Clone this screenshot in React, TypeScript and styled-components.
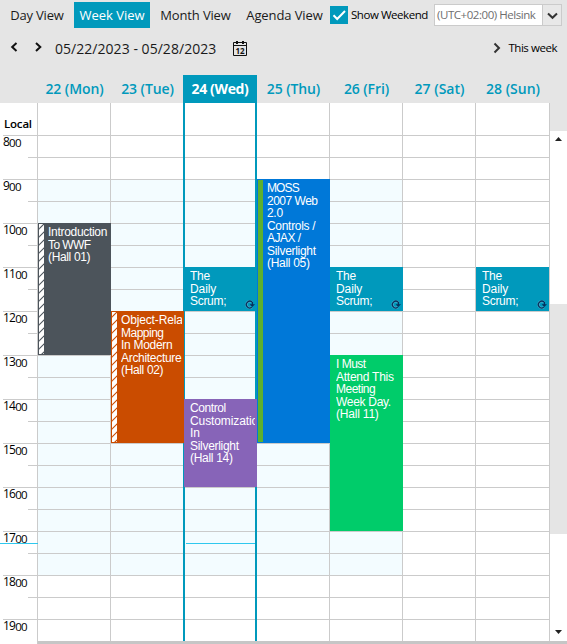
import React from 'react';
import styled, { createGlobalStyle, css } from 'styled-components';

const ACCENT = '#0099bc';
const LINE = '#cbcbcb';
const SLOT = 22;

const GlobalStyle = createGlobalStyle`
  *, *::before, *::after { box-sizing: border-box; }
  html, body { margin: 0; background: #e5e5e5; overflow: hidden; }
`;

const Page = styled.div`
  width: 567px;
  height: 644px;
  display: flex;
  flex-direction: column;
  background: #e5e5e5;
  color: #000;
  font-family: 'Open Sans', 'Noto Sans', sans-serif;
  font-size: 14px;
  overflow: hidden;
`;

const Text = styled.span<{ $ls?: number }>`
  white-space: pre;
  letter-spacing: ${(p) => p.$ls ?? 0}px;
`;

const Toolbar = styled.div`
  display: flex;
  height: 30px;
  padding-top: 2px;
  flex: none;
`;

const ViewTab = styled.button<{ $active?: boolean; $w: number }>`
  width: ${(p) => p.$w}px;
  height: 26px;
  padding: 0;
  border: 0;
  flex: none;
  text-align: center;
  font: 13px/26px 'Open Sans', sans-serif;
  white-space: nowrap;
  color: ${(p) => (p.$active ? '#fff' : '#1a1a1a')};
  background: ${(p) => (p.$active ? ACCENT : 'transparent')};
`;

const CheckLabel = styled.label`
  display: flex;
  margin-left: 2px;
  width: 104px;
  gap: 3px;
  padding-top: 4px;
  flex: none;
  font-size: 11.5px;
  line-height: 18px;
`;

const CheckBox = styled.span`
  width: 18px;
  height: 18px;
  flex: none;
  background: ${ACCENT};
  svg { display: block; }
`;

const ZoneSelect = styled.div`
  display: flex;
  width: 128px;
  height: 22px;
  margin-top: 2px;
  border: 1px solid ${LINE};
  background: #fff;
  color: #6e6e6e;
  font-size: 11.5px;
  line-height: 20px;
  flex: none;
`;

const ZoneValue = styled.div`
  width: 107px;
  padding-left: 2px;
  overflow: hidden;
`;

const ZoneArrow = styled.div`
  flex: 1;
  border-left: 1px solid ${LINE};
  background: #e8e8e8;
  svg { display: block; }
`;

const Navigator = styled.div`
  display: flex;
  align-items: center;
  height: 45px;
  padding: 0 10px 9px 9px;
  flex: none;
`;

const NavArrow = styled.svg`
  width: 12px;
  height: 12px;
  margin-right: 12px;
  margin-top: -2px;
  fill: none;
  stroke: #111;
  stroke-width: 2;
`;

const DateRange = styled.span`
  width: 178px;
  margin-left: -2px;
  line-height: 20px;
  padding-top: 2px;
  white-space: nowrap;
  color: #1a1a1a;
`;

const ThisWeek = styled.div`
  margin-left: auto;
  display: flex;
  align-items: center;
  gap: 7px;
  font-size: 11.5px;
  line-height: 18px;
`;

const DayHeaders = styled.div`
  display: grid;
  grid-template-columns: repeat(6, 73px) 74px;
  height: 28px;
  padding-left: 38px;
  flex: none;
`;

const DayHeader = styled.div<{ $today?: boolean }>`
  text-align: center;
  font-weight: 600;
  line-height: 28px;
  color: ${ACCENT};
  ${(p) =>
    p.$today &&
    css`
      margin-left: -1px;
      background: ${ACCENT};
      color: #fff;
      font-weight: 700;
    `}
`;

const Body = styled.div`
  display: grid;
  grid-template-columns: 38px repeat(6, 73px) 74px 17px;
  height: 538px;
  flex: none;
`;

const Gutter = styled.div`
  position: relative;
  background: #fff;
  border-right: 1px solid ${LINE};
`;

const GutterTop = styled.div`
  height: 32px;
  padding: 12px 0 0 4px;
  font-size: 11.5px;
  font-weight: 600;
  line-height: 18px;
`;

const HourCell = styled.div`
  display: flex;
  flex-direction: column;
  align-items: flex-end;
  height: ${SLOT * 2}px;
`;

const HourLabel = styled.div`
  width: 34px;
  height: ${SLOT}px;
  border-top: 1px solid ${LINE};
  font-size: 12px;
  line-height: 12px;
  letter-spacing: -0.8px;
  white-space: nowrap;
`;

const Minutes = styled.span`
  position: relative;
  top: 1px;
  font-size: 11.5px;
  letter-spacing: -0.7px;
`;

const HalfTick = styled.div`
  width: 9px;
  height: ${SLOT}px;
  border-top: 1px solid ${LINE};
`;

const NowLine = styled.div<{ $left: number; $right: number; $top: number }>`
  position: absolute;
  top: ${(p) => p.$top}px;
  left: ${(p) => p.$left}px;
  right: ${(p) => p.$right}px;
  height: 1px;
  background: #2fc8ee;
`;

const Column = styled.div<{ $today?: boolean }>`
  position: relative;
  background: #fff;
  display: grid;
  grid-template-columns: 100%;
  grid-template-rows: 32px repeat(23, ${SLOT}px);
  height: 538px;
  overflow: visible;
  z-index: ${(p) => (p.$today ? 1 : 'auto')};
`;

const Slot = styled.div<{ $row: number; $work: boolean }>`
  grid-area: ${(p) => p.$row} / 1;
  border-top: ${(p) => (p.$row > 1 ? `1px solid ${LINE}` : '0')};
  border-right: 1px solid ${LINE};
  background: ${(p) => (p.$work ? '#f3fcff' : '#fff')};
`;

const TodayFrame = styled.div`
  grid-area: 1 / 1 / -1 / 2;
  margin-left: -1px;
  border: solid ${ACCENT};
  border-width: 0 2px;
`;

const EventBox = styled.div<{ $from: number; $to: number; $color: string }>`
  grid-area: ${(p) => p.$from} / 1 / ${(p) => p.$to} / 2;
  position: relative;
  z-index: 2;
  display: flex;
  width: 73px;
  background: ${(p) => p.$color};
  border: 1px solid ${(p) => p.$color};
  color: #fff;
  overflow: hidden;
`;

const Strip = styled.div<{ $fill: string }>`
  width: 5px;
  flex: none;
  background: ${(p) => p.$fill};
  svg { display: block; }
`;

const EventText = styled.div<{ $pad: number }>`
  flex: 1;
  min-width: 0;
  margin: 2px 1px 0 ${(p) => p.$pad}px;
  overflow: hidden;
  font: 12px/12.55px 'Liberation Sans', Arial, sans-serif;
`;

const EventLine = styled.div<{ $ls: number }>`
  white-space: pre;
  letter-spacing: ${(p) => p.$ls}px;
`;

const RecurIcon = styled.svg`
  position: absolute;
  right: 1px;
  bottom: 1px;
`;

const ScrollTrack = styled.div`
  padding-top: 28px;
  display: flex;
  flex-direction: column;
`;

const ScrollPart = styled.div<{ $h: number; $thumb?: boolean; $end?: boolean }>`
  height: ${(p) => p.$h}px;
  background: ${(p) => (p.$thumb ? '#e5e5e5' : '#fff')};
  display: flex;
  justify-content: center;
  align-items: ${(p) => (p.$end ? 'flex-end' : 'flex-start')};
  padding: 6px 0 7px;
`;

const Footer = styled.div`
  height: 3px;
  background: #c6c6c6;
`;

type Line = [string, number];
type Evt = {
  from: number;
  to: number;
  color: string;
  lines: Line[];
  strip?: 'hatch' | 'solid';
  recur?: boolean;
};

const scrum: Evt = {
  from: 8,
  to: 10,
  color: ACCENT,
  recur: true,
  lines: [['The', -0.3], ['Daily', -0.1], ['Scrum;', -0.3]],
};

const days: { label: string; ls: number; today?: boolean; weekend?: boolean; events: Evt[] }[] = [
  {
    label: '22 (Mon)', ls: -0.1,
    events: [{
      from: 6, to: 12, color: '#4c545b', strip: 'hatch',
      lines: [['Introduction', -0.3], ['To WWF', -0.6], ['(Hall 01)', -0.35]],
    }],
  },
  {
    label: '23 (Tue)', ls: -0.1,
    events: [{
      from: 10, to: 16, color: '#ca4c00', strip: 'hatch',
      lines: [['Object-Relational', -0.15], ['Mapping', -0.5], ['In Modern', -0.3], ['Architecture', -0.3], ['(Hall 02)', -0.35]],
    }],
  },
  {
    label: '24 (Wed)', ls: -0.35, today: true,
    events: [scrum, {
      from: 14, to: 18, color: '#8764b8',
      lines: [['Control', -0.4], ['Customization', -0.1], ['In', 0], ['Silverlight', -0.3], ['(Hall 14)', -0.3]],
    }],
  },
  {
    label: '25 (Thu)', ls: -0.1,
    events: [{
      from: 4, to: 16, color: '#0078d8', strip: 'solid',
      lines: [['MOSS', -0.9], ['2007 Web', -0.5], ['2.0', -0.3], ['Controls /', -0.3], ['AJAX /', -0.5], ['Silverlight', -0.3], ['(Hall 05)', -0.3]],
    }],
  },
  {
    label: '26 (Fri)', ls: -0.1,
    events: [scrum, {
      from: 12, to: 20, color: '#00cc6a',
      lines: [['I Must', -0.5], ['Attend This', -0.25], ['Meeting', -0.5], ['Week Day.', -0.3], ['(Hall 11)', -0.2]],
    }],
  },
  { label: '27 (Sat)', ls: 0, weekend: true, events: [] },
  { label: '28 (Sun)', ls: 0, weekend: true, events: [scrum] },
];

const slots = Array.from({ length: 24 }, (_, i) => i + 1);
const hours = Array.from({ length: 12 }, (_, i) => i + 8);

const Hatch = ({ color, height }: { color: string; height: number }) => (
  <svg width="5" height={height}>
    {Array.from({ length: Math.ceil(height / 8) + 1 }, (_, i) => (
      <path key={i} d={`M-1 ${i * 8 + 6}L6 ${i * 8 - 1}`} stroke={color} strokeWidth="1.2" />
    ))}
  </svg>
);

const EventCard = ({ e }: { e: Evt }) => (
  <EventBox $from={e.from} $to={e.to} $color={e.color}>
    {e.strip && (
      <Strip $fill={e.strip === 'hatch' ? '#fff' : '#5cb030'}>
        {e.strip === 'hatch' && <Hatch color={e.color} height={(e.to - e.from) * SLOT - 2} />}
      </Strip>
    )}
    <EventText $pad={e.strip ? 4 : 5}>
      {e.lines.map(([t, ls]) => (
        <EventLine key={t} $ls={ls}>{t}</EventLine>
      ))}
    </EventText>
    {e.recur && (
      <RecurIcon width="10" height="9" viewBox="0 0 10 9" fill="none">
        <path d="M7.4 2.6A3.3 3.3 0 1 0 6.8 7.2" stroke="#9fd0e4" strokeWidth="2.4" opacity=".45" />
        <path d="M7.4 2.4A3.4 3.4 0 1 0 6.8 7.3M7.4 2V5" stroke="#06305c" strokeWidth="1.3" />
        <path d="M4.6 4.2H10L7.3 6.9Z" fill="#06305c" />
      </RecurIcon>
    )}
  </EventBox>
);

export default function App() {
  return (
    <Page>
      <GlobalStyle />
      <Toolbar>
        <ViewTab $w={74}><Text $ls={-0.2}>Day View</Text></ViewTab>
        <ViewTab $w={76} $active><Text $ls={0}>Week View</Text></ViewTab>
        <ViewTab $w={91}><Text $ls={-0.15}>Month View</Text></ViewTab>
        <ViewTab $w={87}><Text $ls={-0.1}>Agenda View</Text></ViewTab>
        <CheckLabel>
          <CheckBox>
            <svg width="18" height="18" fill="none" stroke="#fff" strokeWidth="2"><path d="M3.5 9.2L7.2 13L15 5" /></svg>
          </CheckBox>
          <Text $ls={-0.45}>Show Weekend</Text>
        </CheckLabel>
        <ZoneSelect>
          <ZoneValue><Text $ls={-0.45}>(UTC+02:00) Helsink</Text></ZoneValue>
          <ZoneArrow>
            <svg width="18" height="20" fill="none" stroke="#333" strokeWidth="2"><path d="M5 8.5L9.5 12.8L14 8.5" /></svg>
          </ZoneArrow>
        </ZoneSelect>
      </Toolbar>
      <Navigator>
        <NavArrow viewBox="0 0 12 12"><path d="M7.5 2L3.2 6L7.5 10" /></NavArrow>
        <NavArrow viewBox="0 0 12 12"><path d="M3 2L7.3 6L3 10" /></NavArrow>
        <DateRange><Text $ls={0.04}>05/22/2023 - 05/28/2023</Text></DateRange>
        <svg width="14" height="16" viewBox="0 0 14 16" fill="none" stroke="#111">
          <path d="M.5 2.5H13.5V15.5H.5ZM.5 5.5H13.5" />
          <path d="M4 1V4M10 1V4" strokeWidth="2" />
          <text x="7" y="13.6" textAnchor="middle" fontFamily="Open Sans" fontSize="8" fontWeight="700" fill="#111" stroke="none">12</text>
        </svg>
        <ThisWeek>
          <svg width="8" height="12" fill="none" stroke="#333" strokeWidth="2"><path d="M1.5 1.5L6 6L1.5 10.5" /></svg>
          <Text $ls={-0.45}>This week</Text>
        </ThisWeek>
      </Navigator>
      <DayHeaders>
        {days.map((d) => (
          <DayHeader key={d.label} $today={d.today}><Text $ls={d.ls}>{d.label}</Text></DayHeader>
        ))}
      </DayHeaders>
      <Body>
        <Gutter>
          <GutterTop><Text $ls={-0.2}>Local</Text></GutterTop>
          {hours.map((h) => (
            <HourCell key={h}>
              <HourLabel>{h}<Minutes>00</Minutes></HourLabel>
              {h < 19 && <HalfTick />}
            </HourCell>
          ))}
          <NowLine $top={440} $left={0} $right={-2} />
        </Gutter>
        {days.map((d) => (
          <Column key={d.label} $today={d.today}>
            {slots.map((s) => (
              <Slot key={s} $row={s} $work={!d.weekend && s >= 4 && s < 22} />
            ))}
            {d.today && <TodayFrame />}
            {d.today && <NowLine $top={440} $left={2} $right={2} />}
            {d.events.map((e) => <EventCard key={e.from} e={e} />)}
          </Column>
        ))}
        <ScrollTrack>
          <ScrollPart $h={173}><svg width="7" height="4"><path d="M0 4L3.5 0L7 4Z" fill="#222" /></svg></ScrollPart>
          <ScrollPart $h={230} $thumb />
          <ScrollPart $h={107} $end><svg width="7" height="4"><path d="M0 0L3.5 4L7 0Z" fill="#222" /></svg></ScrollPart>
        </ScrollTrack>
      </Body>
      <Footer />
    </Page>
  );
}
